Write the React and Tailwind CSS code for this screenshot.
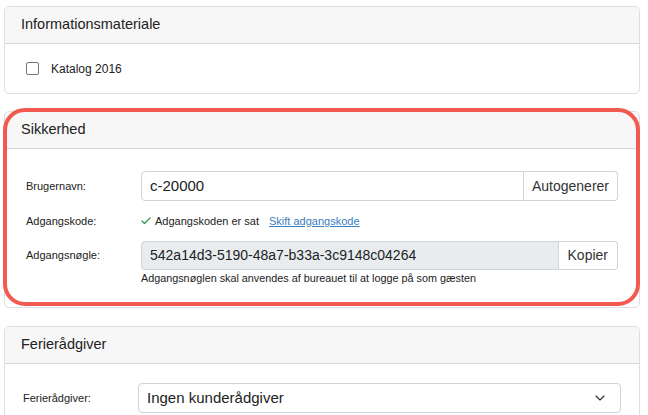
import React from "react";
import { ChevronDown, Check } from "lucide-react";

function Card({ title, children, className = "" }) {
  return (
    <div className={`relative rounded-[5px] border border-[#dfdfdf] bg-white ${className}`}>
      <div className="flex h-[37px] items-center rounded-t-[5px] border-b border-[#d6d6d6] bg-[#f7f7f7] px-[16px] text-[14.5px] text-[#222]">
        {title}
      </div>
      {children}
    </div>
  );
}

export default function App() {
  return (
    <div
      className="min-h-screen w-full bg-white pl-[4px] pr-[8px] pt-[6px] text-[#222]"
      style={{ fontFamily: "'Liberation Sans', Arial, sans-serif" }}
    >
      <Card title="Informationsmateriale">
        <div className="flex h-[49px] items-center px-[21px]">
          <span className="h-[13px] w-[13px] rounded-[2px] border-[1.5px] border-[#767676] bg-white" />
          <span className="ml-[12px] text-[12px]">Katalog 2016</span>
        </div>
      </Card>

      <Card title="Sikkerhed" className="mt-[17px]">
        <div className="px-[21px] pt-[22px] pb-[22px]">
          <div className="flex items-center">
            <div className="w-[115px] text-[11px]">Brugernavn:</div>
            <div className="flex h-[30px] flex-1">
              <div className="flex flex-1 items-center rounded-l-[4px] border border-[#ced4da] bg-white px-[8px] text-[15px]">
                c-20000
              </div>
              <button className="rounded-r-[4px] border border-l-0 border-[#ced4da] bg-white px-[8px] text-[14px] text-[#333]">
                Autogenerer
              </button>
            </div>
          </div>

          <div className="mt-[10px] flex h-[20px] items-center">
            <div className="w-[114px] text-[11px]">Adgangskode:</div>
            <div className="flex w-[129px] items-center">
              <Check className="h-[12px] w-[12px] text-[#2e9e4f]" strokeWidth={2.5} />
              <span className="ml-[3px] whitespace-nowrap text-[11px]">Adgangskoden er sat</span>
            </div>
            <a href="#" className="text-[11px] text-[#3a7dbf] underline">
              Skift adgangskode
            </a>
          </div>

          <div className="mt-[10px] flex items-start">
            <div className="flex h-[29px] w-[115px] items-center text-[11px]">Adgangsnøgle:</div>
            <div className="flex-1">
              <div className="flex h-[29px]">
                <div className="flex flex-1 items-center rounded-l-[4px] border border-[#ced4da] bg-[#e9ecef] px-[8px] text-[14px]">
                  542a14d3-5190-48a7-b33a-3c9148c04264
                </div>
                <button className="rounded-r-[4px] border border-l-0 border-[#ced4da] bg-white px-[9px] text-[14px] text-[#333]">
                  Kopier
                </button>
              </div>
              <div className="mt-[1px] text-[10.8px] leading-[14px]">
                Adgangsnøglen skal anvendes af bureauet til at logge på som gæsten
              </div>
            </div>
          </div>
        </div>
        <div className="pointer-events-none absolute -top-[4px] -left-[2px] -right-[1px] bottom-[1px] rounded-[22px] border-[4px] border-[#f25a50]" />
      </Card>

      <Card title="Ferierådgiver" className="mt-[18px]">
        <div className="flex items-center px-[18px] pt-[19px] pb-[20px]">
          <div className="w-[115px] text-[11px]">Ferierådgiver:</div>
          <div className="flex h-[30px] flex-1 items-center justify-between rounded-[4px] border border-[#ced4da] bg-white pl-[8px] pr-[12px] text-[15px]">
            <span>Ingen kunderådgiver</span>
            <ChevronDown className="h-[16px] w-[16px] text-[#333]" strokeWidth={1.75} />
          </div>
        </div>
      </Card>
    </div>
  );
}
